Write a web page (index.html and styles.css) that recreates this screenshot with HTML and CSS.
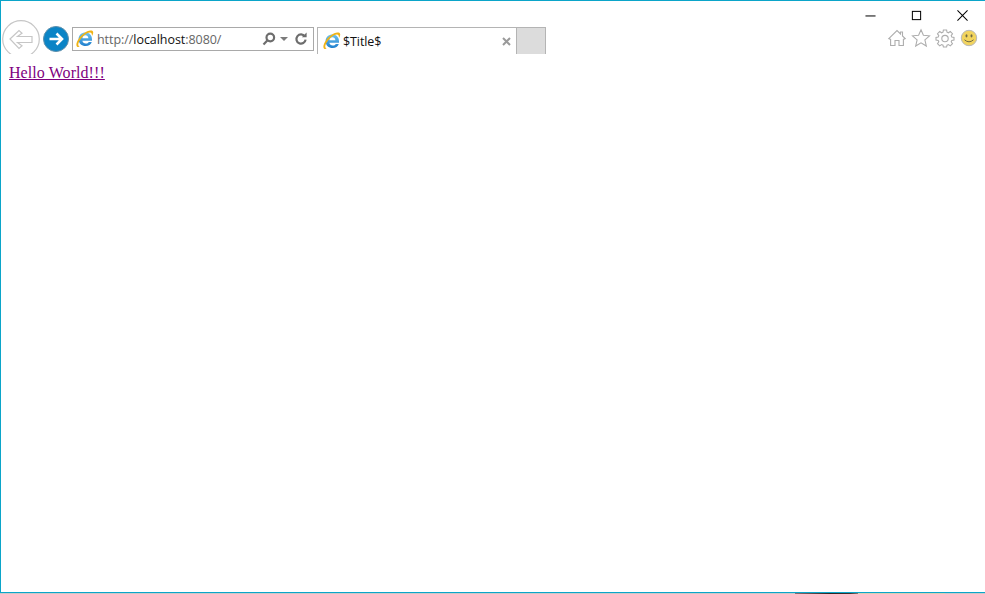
FILE: index.html
```html
<!DOCTYPE html>
<html lang="en">
<head>
<meta charset="utf-8">
<title>$Title$</title>
<link rel="stylesheet" href="styles.css">
</head>
<body>
<div class="window">
  <header class="chrome">
    <div class="caption">
      <svg class="cap-icon" viewBox="0 0 12 12"><path d="M0.5 6.5H11.5" /></svg>
      <svg class="cap-icon" viewBox="0 0 12 12"><rect x="1.5" y="1.5" width="9" height="9"/></svg>
      <svg class="cap-icon" viewBox="0 0 12 12"><path d="M0.5 0.5L11.5 11.5M11.5 0.5L0.5 11.5"/></svg>
    </div>
    <div class="toolbar">
      <div class="nav">
        <svg class="back" viewBox="0 0 38 38"><circle cx="19" cy="19" r="18.3"/><path d="M8 19L17 10.5L20 13.2L15.5 16.5H30V22.5H15.5L20 25.8L17 28.5Z"/></svg>
        <svg class="forward" viewBox="0 0 26 26"><circle cx="13" cy="13" r="12.5"/><path d="M6.5 13H18.5M13.5 7.5L19 13L13.5 18.5"/></svg>
      </div>
      <div class="address">
        <svg class="ie" viewBox="0 0 18 18"><use href="#ie-logo"/></svg>
        <span class="url">http://<b>localhost</b>:8080/</span>
        <span class="addr-tools">
          <svg class="tool-search" viewBox="0 0 14 14"><circle cx="8.3" cy="5.5" r="3.8"/><path d="M5.5 8.3L1.5 12.5"/></svg>
          <svg class="tool-caret" viewBox="0 0 8 4"><path d="M0 0H8L4 4Z"/></svg>
          <svg class="tool-refresh" viewBox="0 0 14 14"><path d="M10.8 4.4A4.6 4.6 0 1 0 11.6 7.7"/><path class="fill" d="M7.8 5.2H12.6V0.6Z"/></svg>
        </span>
      </div>
      <div class="tab">
        <svg class="ie" viewBox="0 0 18 18"><use href="#ie-logo"/></svg>
        <span class="tab-title">$Title$</span>
        <svg class="tab-close" viewBox="0 0 9 9"><path d="M1 1L8 8M8 1L1 8"/></svg>
      </div>
      <div class="new-tab"></div>
      <div class="commands">
        <svg class="cmd" viewBox="0 0 18 18"><path d="M0.8 9.6L9 1.6L12.5 5V3H14.5V7L17.2 9.6L15.4 10.4V16.5H11V11.5H7V16.5H2.6V10.4Z"/></svg>
        <svg class="cmd" viewBox="0 0 18 18"><path d="M9 0.8L11.4 6.2L17.5 6.8L12.9 10.9L14.3 17L9 13.8L3.7 17L5.1 10.9L0.5 6.8L6.6 6.2Z"/></svg>
        <svg class="cmd" viewBox="0 0 18 18"><path d="M7.4 1H10.6L11 3.2L12.4 3.8L14.3 2.5L16.5 4.7L15.2 6.6L15.8 8L18 8.4V11L15.8 11.4L15.2 12.8L16.5 14.7L14.3 16.9L12.4 15.6L11 16.2L10.6 18H7.4L7 16.2L5.6 15.6L3.7 16.9L1.5 14.7L2.8 12.8L2.2 11.4L0 11V8.4L2.2 8L2.8 6.6L1.5 4.7L3.7 2.5L5.6 3.8L7 3.2Z"/><circle cx="9" cy="9.6" r="3.2"/></svg>
        <svg class="smile" viewBox="0 0 18 18"><circle class="face" cx="9" cy="9" r="7.7"/><ellipse class="eye" cx="6.5" cy="6.8" rx="1" ry="1.6"/><ellipse class="eye" cx="11.5" cy="6.8" rx="1" ry="1.6"/><path class="mouth" d="M4.5 10.8Q9 14.8 13.5 10.8"/></svg>
      </div>
    </div>
  </header>
  <main class="content">
    <a class="link" href="#">Hello World!!!</a>
  </main>
</div>
<div class="sliver"></div>
<svg class="defs" width="0" height="0" aria-hidden="true">
  <defs>
    <linearGradient id="ie-blue" x1="0" y1="0" x2="0" y2="1">
      <stop offset="0" stop-color="#6fc3ee"/>
      <stop offset="1" stop-color="#1f7fce"/>
    </linearGradient>
    <symbol id="ie-logo" viewBox="0 0 18 18">
      <path fill-rule="evenodd" d="M2.6 9.2C2.6 5.2 5.6 2.6 9.5 2.6C13.5 2.6 16 5.4 16 9.4V10.8H6.4C6.7 12.6 8 13.6 9.8 13.6C11.2 13.6 12.1 13 12.7 12H15.8C14.9 14.6 12.7 16 9.7 16C5.6 16 2.6 13.4 2.6 9.2ZM6.4 8.2H12.4C12.2 6.4 11.2 5.3 9.4 5.3C7.7 5.3 6.6 6.4 6.4 8.2Z" fill="url(#ie-blue)"/>
      <path d="M3.8 16.6C0.4 18 -0.8 15 1.8 10.2C4.8 4.6 12 -0.6 15.6 0.6C18 1.4 17.4 4 16 6C16 4 15.6 2.4 13.8 2.5C10.4 2.7 5.6 7 3.3 11.2C1.8 14 1.9 16.2 3.8 16.6Z" fill="#f0b316"/>
    </symbol>
  </defs>
</svg>
</body>
</html>
```
FILE: styles.css
```css
* { box-sizing: border-box; }
html, body { margin: 0; padding: 0; height: 100%; background: #fff; overflow: hidden; }
.window {
  width: 985px;
  height: 593px;
  border: 1px solid #0ba5c9;
  border-right: 0;
  display: flex;
  flex-direction: column;
  background: #fff;
}
.sliver {
  height: 1px;
  background: linear-gradient(90deg,
    #c9c9c9 0, #c9c9c9 795px,
    #8a6f72 795px, #2a2522 830px, #3a3230 850px, #8a7a70 858px,
    #d6cfb4 858px, #d6cfb4 945px,
    #c9c9c9 945px, #c9c9c9 985px);
}
.chrome { display: flex; flex-direction: column; }
.caption {
  height: 18px;
  padding: 9px 17px 0 0;
  display: flex;
  justify-content: flex-end;
  align-items: flex-start;
  gap: 35px;
  position: relative;
  z-index: 1;
}
.cap-icon { width: 11px; height: 11px; flex: none; fill: none; stroke: #000; stroke-width: 1.1; overflow: visible; }
.toolbar { display: flex; align-items: flex-start; height: 35px; }
.nav { display: flex; align-items: flex-start; width: 71px; height: 35px; padding-left: 1px; overflow: hidden; }
.back { width: 38px; height: 38px; flex: none; margin-top: 1px; fill: none; stroke: #c6c6c6; stroke-width: 1.2; }
.forward { width: 26px; height: 26px; flex: none; margin: 7px 0 0 3px; }
.forward circle { fill: #0a84c6; stroke: #5f8faa; stroke-width: 1; }
.forward path { fill: none; stroke: #fff; stroke-width: 2.6; }
.address {
  width: 242px;
  height: 24px;
  margin-top: 8px;
  border: 1px solid #a9a9a9;
  display: flex;
  align-items: center;
  padding: 0 5px 0 3px;
}
.ie { width: 18px; height: 18px; flex: none; }
.url { margin-left: 3px; padding-top: 1px; font: 12.5px/16px "Open Sans", "Noto Sans", sans-serif; color: #666; white-space: nowrap; letter-spacing: -0.05px; }
.url b { font-weight: 400; color: #111; }
.addr-tools { margin-left: auto; display: flex; align-items: center; gap: 4px; }
.tool-search { width: 14px; height: 14px; fill: none; stroke: #6d6d6d; stroke-width: 2.2; }
.tool-caret { width: 8px; height: 4px; fill: #7b7b7b; margin: 0 2px 0 0; }
.tool-refresh { width: 14px; height: 14px; fill: none; stroke: #6d6d6d; stroke-width: 2.2; }
.tool-refresh .fill { fill: #6d6d6d; stroke: none; }
.tab {
  width: 200px;
  height: 27px;
  margin: 8px 0 0 3px;
  border: 1px solid #b4b4b4;
  border-bottom: 0;
  display: flex;
  align-items: center;
  padding: 0 5px;
}
.tab-title { margin-left: 2px; padding-top: 1px; font: 12.5px/16px "Open Sans", "Noto Sans", sans-serif; color: #111; letter-spacing: -0.1px; }
.tab-close { width: 9px; height: 9px; margin-left: auto; fill: none; stroke: #9a9a9a; stroke-width: 2; }
.new-tab {
  width: 29px;
  height: 27px;
  margin-top: 8px;
  background: #dcdcdc;
  border: 1px solid #b4b4b4;
  border-left: 0;
  border-bottom: 0;
}
.commands {
  margin-left: auto;
  display: flex;
  align-items: center;
  gap: 6px;
  padding: 10px 7px 0 0;
}
.cmd { width: 18px; height: 18px; fill: #fff; stroke: #adadad; stroke-width: 1.1; overflow: visible; }
.smile { width: 18px; height: 18px; }
.face { fill: #f2d45e; stroke: #b9b9b9; stroke-width: 1; }
.eye { fill: #6f6a45; }
.mouth { fill: none; stroke: #6f6a45; stroke-width: 1; }
.content { padding: 10px 8px 8px; flex: 1; }
.link { font: 16px/18px "Liberation Serif", "Times New Roman", serif; color: #800080; letter-spacing: 0.07px; }
.defs { position: absolute; }
```
